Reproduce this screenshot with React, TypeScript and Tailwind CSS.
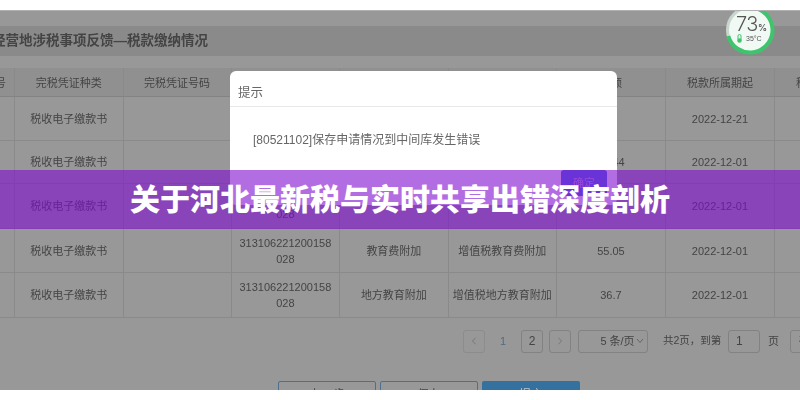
const font = "font-['Liberation_Sans','Noto_Sans_CJK_SC',sans-serif]";

const rows = [
  { no: "", item: "", kind: "", amount: "", date: "2022-12-21" },
  { no: "", item: "", kind: "", amount: "73.44", date: "2022-12-01" },
  { no: "313106221200158 028", item: "", kind: "", amount: "", date: "2022-12-01" },
  { no: "313106221200158 028", item: "教育费附加", kind: "增值税教育费附加", amount: "55.05", date: "2022-12-01" },
  { no: "313106221200158 028", item: "地方教育附加", kind: "增值税地方教育附加", amount: "36.7", date: "2022-12-01" },
];

const cell = "flex items-center justify-center text-center border-r border-[#8a8a8a] px-1 pt-[1px] leading-[16px]";
const gridCols = "grid grid-cols-[15px_108.6px_108px_108.6px_108.4px_108.4px_109px_109px_109px] w-[900px]";

function Table() {
  return (
    <div className="mt-3 text-[11px] text-[#444444]">
      <div className={`${gridCols} h-[29px] bg-[#909090] border-b border-[#838383]`}>
        <div className={`${cell} !px-0 !justify-end overflow-hidden`}><span className="whitespace-nowrap pr-[8px]">号</span></div>
        <div className={cell}>完税凭证种类</div>
        <div className={cell}>完税凭证号码</div>
        <div className={cell}>税票号码</div>
        <div className={cell}>征收项目</div>
        <div className={cell}>征收品目</div>
        <div className={cell}>税额</div>
        <div className={cell}>税款所属期起</div>
        <div className={cell}>税款所属期止</div>
      </div>
      {rows.map((r, i) => (
        <div key={i} className={`${gridCols} ${i < 2 ? "h-[43.5px]" : "h-[44.5px]"} border-b border-[#8a8a8a]`}>
          <div className={cell}></div>
          <div className={cell}>税收电子缴款书</div>
          <div className={cell}></div>
          <div className={cell}><span className="w-[96px]">{r.no}</span></div>
          <div className={cell}>{r.item}</div>
          <div className={cell}>{r.kind}</div>
          <div className={cell}>{r.amount}</div>
          <div className={cell}>{r.date}</div>
          <div className={cell}>{r.date}</div>
        </div>
      ))}
    </div>
  );
}

function Pager() {
  const box = "h-[23px] shrink-0 flex items-center justify-center rounded-[3px] border border-[#828282]";
  return (
    <div className="mt-[12px] pl-[463px] flex items-center text-[11px] text-[#444444] h-[23px] whitespace-nowrap">
      <div className={`${box} w-[22px] !border-[#8c8c8c] text-[#777777]`}>
        <svg width="6" height="8" viewBox="0 0 6 8" fill="none" stroke="currentColor"><path d="M4.5 .8 1.5 4l3 3.2" /></svg>
      </div>
      <span className="ml-[15px] w-[6px] shrink-0 text-[#4f6b85]">1</span>
      <div className={`${box} ml-[15px] w-[22px] text-[12px]`}>2</div>
      <div className={`${box} ml-[6px] w-[22px] text-[#777777]`}>
        <svg width="6" height="8" viewBox="0 0 6 8" fill="none" stroke="currentColor"><path d="M1.5 .8 4.5 4l-3 3.2" /></svg>
      </div>
      <div className={`${box} ml-[7px] w-[70px] pl-[18px] gap-[1px]`}>
        <span>5 条/页</span>
        <svg width="8" height="6" viewBox="0 0 8 6" fill="none" stroke="#666666"><path d="M1 1l3 3.5L7 1" /></svg>
      </div>
      <span className="ml-[15px] w-[59px] shrink-0 text-[10.5px]">共2页，到第</span>
      <div className={`${box} ml-[6px] w-[32px] !justify-start pl-[7px] text-[12px]`}>1</div>
      <span className="ml-[8px] shrink-0">页</span>
      <div className={`${box} ml-[11px] w-[40px]`}>确定</div>
    </div>
  );
}

function Actions() {
  const b = "h-[28px] w-[98px] flex items-center justify-center rounded-[2px] text-[12px]";
  return (
    <div className="mt-[28px] pl-[278px] flex gap-[4px]">
      <div className={`${b} border border-[#4f6f8d] text-[#444444]`}>上一步</div>
      <div className={`${b} border border-[#4f6f8d] text-[#444444]`}>保存</div>
      <div className={`${b} bg-[#35719f] text-[#c4c4c4]`}>提交</div>
    </div>
  );
}

function Gauge() {
  return (
    <div className="absolute left-[725px] top-[-6px] w-[50px] h-[50px]">
      <svg width="50" height="50" viewBox="0 0 50 50" className="absolute inset-0">
        <circle cx="25" cy="25" r="22.5" fill="#f0f9f3" />
        <circle cx="25" cy="25" r="22.5" fill="none" stroke="#c9d6cd" strokeWidth="3" />
        <circle cx="25" cy="25" r="22.5" fill="none" stroke="#3fc36c" strokeWidth="4" strokeDasharray="103.2 141.4" transform="rotate(-100 25 25)" />
      </svg>
      <div className="absolute left-[11px] top-[8px] flex items-baseline text-[#555555] font-['Inter',sans-serif]">
        <span className="text-[20px] leading-[22px] font-light tracking-[-0.5px]">73</span>
        <span className="text-[9px] font-semibold">%</span>
      </div>
      <div className="absolute left-[12px] top-[29px] flex items-center gap-[4px]">
        <svg width="5" height="9" viewBox="0 0 5 9"><rect x="1" y="0.5" width="3" height="6" rx="1.5" fill="none" stroke="#3fc36c" /><circle cx="2.5" cy="6.5" r="2.2" fill="#3fc36c" /></svg>
        <span className="text-[7px] leading-[8px] text-[#555555]">35°C</span>
      </div>
    </div>
  );
}

function Modal() {
  return (
    <div className="absolute left-[230px] top-[60px] w-[387px] h-[134px] bg-white rounded-[6px] text-[#666666]">
      <div className="h-[36px] border-b border-[#e8e8e8] flex items-end pl-[8px] pb-[3px] text-[12.5px]">提示</div>
      <div className="pl-[23px] pt-[25px] text-[12px] leading-[16px]">[80521102]保存申请情况到中间库发生错误</div>
      <div className="absolute left-[331px] top-[99px] w-[46px] h-[26px] rounded-[3px] bg-[#4a6fe0] text-[#b9a4ea] text-[11px] flex items-center justify-center">确定</div>
    </div>
  );
}

export default function App() {
  return (
    <div className={`relative w-[800px] h-[400px] overflow-hidden bg-white flex flex-col ${font}`}>
      <div className="h-[10px] shrink-0 bg-white" />
      <div className="relative h-[380px] shrink-0 overflow-hidden bg-[#989898] border-t border-[#b0b0b0] blur-[0.4px]">
        <div className="mt-[15px] h-[30px] pt-[1px] bg-[#8a8a8a] flex items-center text-[13.5px] font-bold text-[#444444] whitespace-nowrap">
          <span className="ml-[-8px]">经营地涉税事项反馈—税款缴纳情况</span>
        </div>
        <Table />
        <Pager />
        <Actions />
        <Gauge />
        <Modal />
      </div>
      <div className="absolute left-0 top-[170px] w-[800px] h-[59px] pb-[5px] bg-[#800cd0]/60 flex items-center justify-center">
        <h1 className="text-[30px] font-black text-white leading-none font-['Noto_Sans_CJK_SC',sans-serif]">关于河北最新税与实时共享出错深度剖析</h1>
      </div>
    </div>
  );
}
